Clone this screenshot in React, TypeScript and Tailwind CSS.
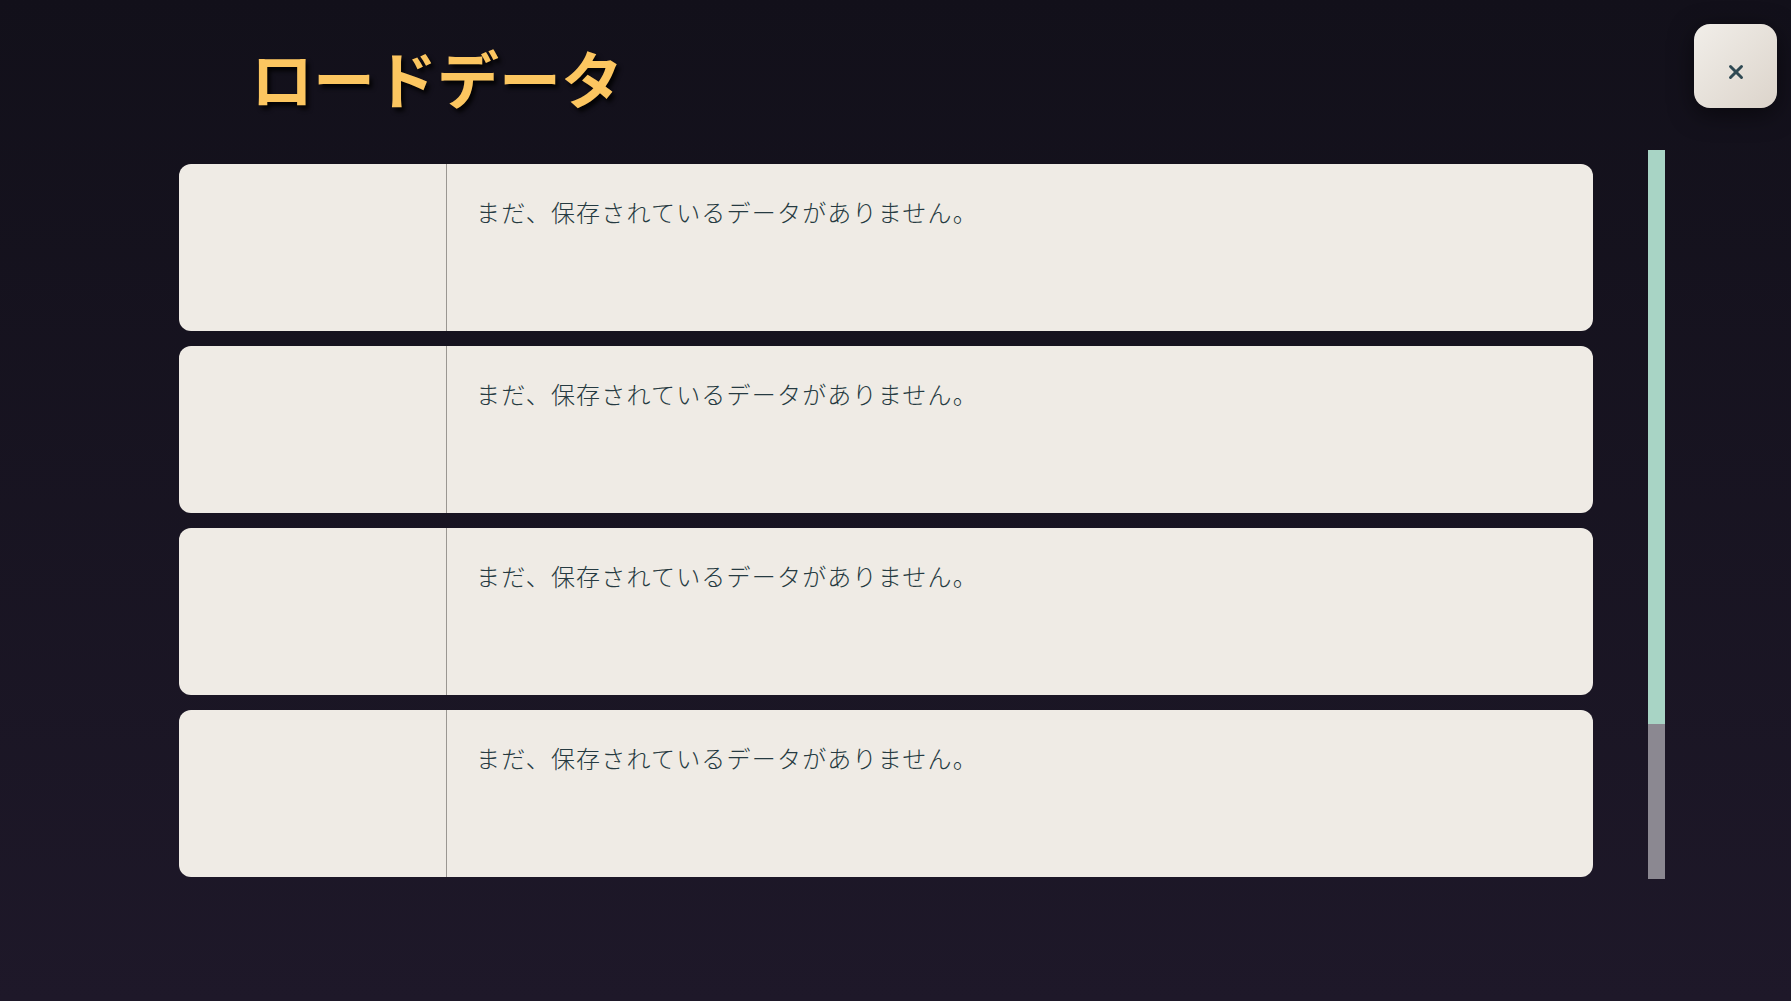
import { X } from "lucide-react";

const slots = [1, 2, 3, 4];

function SaveSlot() {
  return (
    <div className="flex h-[167px] overflow-hidden rounded-[12px] bg-[#efebe5]">
      {/* thumbnail area, empty for now */}
      <div className="w-[268px] shrink-0 border-r border-[#9a9691]" />
      <div className="flex-1 pl-[29px] pt-[30px]">
        <p className="text-[24px] font-light leading-[36px] tracking-[1.2px] text-[#263a41] [font-family:'Noto_Sans_CJK_JP',sans-serif]">
          まだ、保存されているデータがありません。
        </p>
      </div>
    </div>
  );
}

export default function App() {
  return (
    <div className="relative h-[1001px] w-full overflow-hidden bg-gradient-to-b from-[#12101a] to-[#1e1829]">
      <header className="h-[150px] pl-[251px] pt-[46px]">
        <h1 className="text-[62px] font-bold leading-[62px] text-[#fcc660] [font-family:'Noto_Sans_CJK_JP',sans-serif] [text-shadow:3px_4px_4px_rgba(0,0,0,0.85)]">
          ロードデータ
        </h1>
      </header>

      {/* Close button floats in the corner */}
      <button
        type="button"
        aria-label="閉じる"
        className="absolute right-[14px] top-[24px] flex h-[84px] w-[83px] items-center justify-center rounded-[16px] bg-gradient-to-br from-[#f1eee9] to-[#dcd4cb] pt-[12px] text-[#2f4953] shadow-[0_6px_24px_rgba(0,0,0,0.5)]"
      >
        <X size={22} strokeWidth={3.2} />
      </button>

      <div className="flex items-start pl-[179px]">
        <div className="mt-[14px] flex w-[1414px] flex-col gap-[15px]">
          {slots.map((n) => (
            <SaveSlot key={n} />
          ))}
        </div>

        {/* Scrollbar */}
        <div className="ml-[55px] flex h-[729px] w-[17px] flex-col bg-[#8b8891]">
          <div className="h-[574px] bg-[#a8d4c5]" />
        </div>
      </div>
    </div>
  );
}
